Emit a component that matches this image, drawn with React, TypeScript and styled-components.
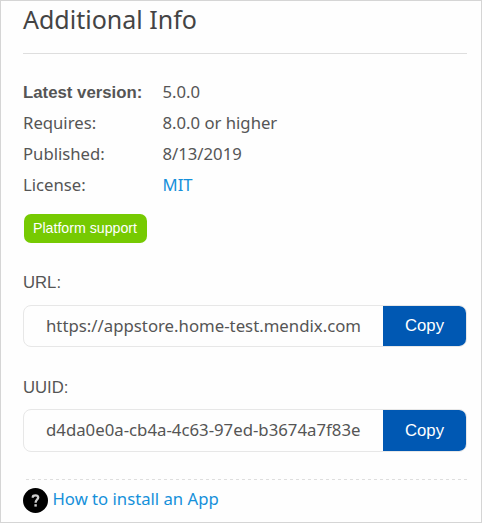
import React from "react";
import styled, { createGlobalStyle } from "styled-components";

const GlobalStyle = createGlobalStyle`
  * { box-sizing: border-box; }
  body { margin: 0; background: #fff; }
`;

const Panel = styled.main`
  width: 482px;
  height: 523px;
  padding: 0 14px 0 22px;
  border: 1px solid #d5d5d5;
  background: #fefefe;
  color: #555;
  font: 16.7px "Noto Sans", sans-serif;
  overflow: hidden;
  white-space: nowrap;
`;

const Title = styled.h2`
  height: 53px;
  margin: 0;
  border-bottom: 1px solid #dedede;
  color: #444;
  font-size: 25px;
  font-weight: 400;
  line-height: 37px;
`;

const Details = styled.dl`
  display: grid;
  grid-template-columns: 139.5px 1fr;
  grid-auto-rows: 31px;
  margin: 23px 0 13px;
  line-height: 29px;
`;

const Term = styled.dt<{ $strong?: boolean }>`
  ${({ $strong }) => $strong && `
    font-family: "Liberation Sans", sans-serif;
    font-size: 16.8px;
    font-weight: 700;
    line-height: 31px;
  `}
`;

const Value = styled.dd`
  margin: 0;
`;

const Link = styled.a`
  color: #1590da;
  text-decoration: none;
`;

const Badge = styled.span`
  display: flex;
  justify-content: center;
  width: 123px;
  height: 29px;
  margin-left: 1px;
  padding-right: 1px;
  border-radius: 7px;
  background: #76ca02;
  color: #fff;
  font: 14.2px/28px "Liberation Sans", sans-serif;
`;

const Label = styled.div`
  height: 22px;
  margin: 29px 0 11px;
  font: 16.7px/22px "Liberation Sans", sans-serif;
`;

const UuidLabel = styled(Label)`
  margin: 30px 0 10px;
`;

const Field = styled.div<{ $height: number }>`
  display: flex;
  height: ${({ $height }) => $height}px;
  border: 1px solid #e7e7e7;
  border-radius: 8px;
  overflow: hidden;
`;

const FieldText = styled.span`
  flex: 1;
  padding-left: 22px;
  font-size: 16.77px;
  line-height: 40px;
`;

const CopyButton = styled.button`
  width: 84px;
  margin-right: -1px;
  padding: 0 1px 0 0;
  border: 0;
  border-radius: 0 7px 7px 0;
  background: #0058b3;
  color: #fff;
  font: 16.7px "Liberation Sans", sans-serif;
`;

const Help = styled.footer`
  display: flex;
  gap: 4.5px;
  margin-top: 27px;
  padding-top: 9px;
  background: repeating-linear-gradient(90deg, transparent 0 3px, #dedede 3px 6px) 0 0 / 100% 1px no-repeat;
  line-height: 21px;
`;

const rows = [
  { term: "Latest version:", value: "5.0.0", strong: true },
  { term: "Requires:", value: "8.0.0 or higher" },
  { term: "Published:", value: "8/13/2019" },
  { term: "License:", value: <Link>MIT</Link> },
];

function QuestionIcon() {
  return (
    <svg width="25" height="25" viewBox="0 0 25 25" aria-hidden="true">
      <circle cx="12.5" cy="12.5" r="12.5" fill="#000" />
      <path d="M9.8 9.7V8.8Q10 7.4 12.5 7.4T15.2 9.4C15.2 11.5 12.6 11.7 12.6 14.7" fill="none" stroke="#ccc" strokeWidth="2.3" />
      <rect x="11.4" y="16.2" width="2.4" height="2.4" fill="#ccc" />
    </svg>
  );
}

export default function App() {
  return (
    <>
      <GlobalStyle />
      <Panel>
        <Title>Additional Info</Title>
        <Details>
          {rows.map((row) => (
            <React.Fragment key={row.term}>
              <Term $strong={row.strong}>{row.term}</Term>
              <Value>{row.value}</Value>
            </React.Fragment>
          ))}
        </Details>
        <Badge>Platform support</Badge>
        <Label>URL:</Label>
        <Field $height={42}>
          <FieldText>https://appstore.home-test.mendix.com</FieldText>
          <CopyButton>Copy</CopyButton>
        </Field>
        <UuidLabel>UUID:</UuidLabel>
        <Field $height={43}>
          <FieldText>d4da0e0a-cb4a-4c63-97ed-b3674a7f83e</FieldText>
          <CopyButton>Copy</CopyButton>
        </Field>
        <Help>
          <QuestionIcon />
          <Link>How to install an App</Link>
        </Help>
      </Panel>
    </>
  );
}
